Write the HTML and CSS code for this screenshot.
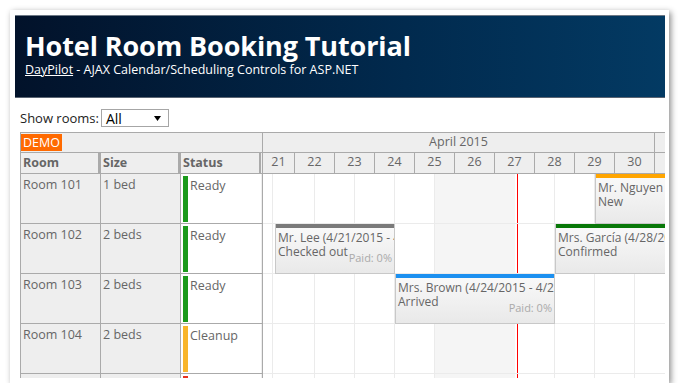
FILE: index.html
```html
<!DOCTYPE html>
<html lang="en">
<head>
  <meta charset="UTF-8">
  <title>Hotel Room Booking Tutorial</title>
  <link rel="stylesheet" href="styles.css">
</head>
<body>
  <div class="window">
    <div class="header">
      <h1>Hotel Room Booking Tutorial</h1>
      <div class="subtitle"><a href="#">DayPilot</a> - AJAX Calendar/Scheduling Controls for ASP.NET</div>
    </div>

    <div class="main">
      <div class="toolbar">
        <span>Show rooms:</span>
        <span class="select">
          <span>All</span>
          <svg width="7" height="5" viewBox="0 0 7 5"><path d="M0 0h7L3.5 5z" fill="#000"/></svg>
        </span>
      </div>

      <div class="scheduler">
        <!-- row headers -->
        <div class="rowpane">
          <div class="corner"><span class="demo">DEMO</span></div>
          <div class="colheads">
            <div class="ch">Room</div>
            <div class="ch">Size</div>
            <div class="ch">Status</div>
          </div>
          <div class="rh">
            <div class="cell">Room 101</div>
            <div class="cell">1 bed</div>
            <div class="cell status"><i class="st ready"></i>Ready</div>
          </div>
          <div class="rh">
            <div class="cell">Room 102</div>
            <div class="cell">2 beds</div>
            <div class="cell status"><i class="st ready"></i>Ready</div>
          </div>
          <div class="rh">
            <div class="cell">Room 103</div>
            <div class="cell">2 beds</div>
            <div class="cell status"><i class="st ready"></i>Ready</div>
          </div>
          <div class="rh">
            <div class="cell">Room 104</div>
            <div class="cell">2 beds</div>
            <div class="cell status"><i class="st cleanup"></i>Cleanup</div>
          </div>
          <div class="rh">
            <div class="cell">Room 105</div>
            <div class="cell">3 beds</div>
            <div class="cell status"><i class="st dirty"></i>Dirty</div>
          </div>
        </div>

        <!-- timeline -->
        <div class="timepane">
          <div class="months">
            <div class="month">April 2015</div>
            <div class="month">May 2015</div>
          </div>
          <div class="days">
            <div class="day first">21</div>
            <div class="day">22</div>
            <div class="day">23</div>
            <div class="day">24</div>
            <div class="day">25</div>
            <div class="day">26</div>
            <div class="day">27</div>
            <div class="day">28</div>
            <div class="day">29</div>
            <div class="day">30</div>
            <div class="day">1</div>
          </div>
          <div class="grid">
            <div class="weekend"></div>
            <div class="now"></div>
            <div class="row">
              <div class="event" style="left: 332px; width: 200px;">
                <div class="bar new"></div>
                <div class="name">Mr. Nguyen (4/29/2015 - 5/2/2015)</div>
                <div class="state">New</div>
              </div>
            </div>
            <div class="row">
              <div class="event" style="left: 12px; width: 120px;">
                <div class="bar out"></div>
                <div class="name">Mr. Lee (4/21/2015 - 4/24/2015)</div>
                <div class="state">Checked out</div>
                <div class="paid">Paid: 0%</div>
              </div>
              <div class="event" style="left: 292px; width: 200px;">
                <div class="bar confirmed"></div>
                <div class="name">Mrs. García (4/28/2015 - 5/2/2015)</div>
                <div class="state">Confirmed</div>
              </div>
            </div>
            <div class="row">
              <div class="event" style="left: 132px; width: 160px;">
                <div class="bar arrived"></div>
                <div class="name">Mrs. Brown (4/24/2015 - 4/28/2015)</div>
                <div class="state">Arrived</div>
                <div class="paid">Paid: 0%</div>
              </div>
            </div>
            <div class="row"></div>
            <div class="row"></div>
          </div>
        </div>
      </div>
    </div>
  </div>
</body>
</html>
```

FILE: styles.css
```css
/* page */
body {
  margin: 0;
  background: #fff;
  font-family: "Open Sans", "Noto Sans", sans-serif;
  color: #666;
}
.window {
  width: 659px;
  height: 373px;
  margin: 10px 0 0 10px;
  padding: 5px 4px 0 5px;
  box-sizing: border-box;
  background: #fff;
  box-shadow: 2px 2px 6px rgba(0, 0, 0, 0.45);
  overflow: hidden;
}

/* header */
.header {
  height: 83px;
  box-sizing: border-box;
  padding: 13px 10px 0;
  background: linear-gradient(90deg, #02122a 0%, #012a4e 60%, #033a63 100%);
  border-top: 1px solid #6d7885;
  border-bottom: 1px solid #5a6472;
  color: #fff;
}
.header h1 {
  margin: 0;
  font-size: 27px;
  line-height: 33px;
  font-weight: 700;
  letter-spacing: -0.1px;
}
.subtitle {
  font-size: 12.5px;
  line-height: 16px;
}
.subtitle a {
  color: #fff;
}

/* toolbar */
.main {
  padding-left: 5px;
}
.toolbar {
  display: flex;
  align-items: center;
  gap: 2px;
  height: 18px;
  padding: 11px 0 5px;
  font-size: 13px;
  color: #222;
}
.select {
  display: flex;
  align-items: center;
  justify-content: space-between;
  width: 68px;
  height: 18px;
  box-sizing: border-box;
  padding: 0 7px 0 4px;
  border: 1px solid #a6a6a6;
  font-size: 14px;
  color: #000;
}

/* scheduler */
.scheduler {
  display: flex;
  height: 245px;
  border-top: 1px solid #aaa;
  border-left: 1px solid #aaa;
  overflow: hidden;
  font-size: 12.5px;
}
.rowpane {
  flex: none;
  width: 241px;
  border-right: 1px solid #aaa;
  background: #eee;
}
.corner {
  height: 20px;
  box-sizing: border-box;
  padding-top: 1px;
  border-bottom: 1px solid #aaa;
}
.demo {
  display: inline-block;
  background: #ff6a00;
  color: #fff;
  padding: 0 2px;
  line-height: 17px;
  font-size: 12.5px;
}
.colheads,
.rh {
  display: grid;
  grid-template-columns: 80px 80px 80px;
  border-bottom: 1px solid #aaa;
}
.colheads {
  height: 20px;
}
.ch {
  padding: 2px 2px 0;
  border-right: 3px solid #aaa;
  font-weight: 700;
  line-height: 16px;
}
.ch:last-child {
  border-right-width: 2px;
}
.rh {
  height: 49px;
}
.cell {
  padding: 3px 2px 0;
  border-right: 1px solid #aaa;
  line-height: 16px;
}
.cell:last-child {
  border-right: none;
}
.cell.status {
  display: flex;
  align-items: flex-start;
  gap: 2px;
  padding: 2px 0 1px 2px;
  background: #fff;
  line-height: 20px;
}
.st {
  flex: none;
  width: 5px;
  height: 46px;
}
.st.ready {
  background: #1b9a1b;
}
.st.cleanup {
  background: #f9b52a;
}
.st.dirty {
  background: #e8321e;
}

/* timeline */
.timepane {
  flex: 1;
  min-width: 0;
}
.months,
.days {
  display: flex;
  height: 20px;
  box-sizing: border-box;
  border-bottom: 1px solid #aaa;
  background: #eee;
}
.days {
  height: 21px;
}
.month {
  flex: none;
  width: 392px;
  box-sizing: border-box;
  border-right: 1px solid #aaa;
  text-align: center;
  line-height: 18px;
}
.day {
  flex: none;
  width: 40px;
  box-sizing: border-box;
  border-right: 1px solid #aaa;
  text-align: center;
  line-height: 18px;
}
.day.first {
  width: 32px;
}
.grid {
  position: relative;
  background: repeating-linear-gradient(90deg, transparent 0 39px, #ebebeb 39px 40px) 12px 0;
}
.weekend {
  position: absolute;
  top: 0;
  bottom: 0;
  left: 171px;
  width: 80px;
  background: #f5f5f5;
  border-left: 1px solid #ebebeb;
}
.now {
  position: absolute;
  top: 0;
  bottom: 0;
  left: 254px;
  width: 1px;
  background: #ff0000;
}
.row {
  position: relative;
  height: 50px;
  box-sizing: border-box;
  border-bottom: 1px solid #ebebeb;
}

/* events */
.event {
  position: absolute;
  top: 0;
  bottom: -1px;
  box-sizing: border-box;
  border: 1px solid #c8c8c8;
  border-top: none;
  background: linear-gradient(#fafafa, #e9e9e9);
  overflow: hidden;
  font-size: 12px;
  line-height: 14px;
  color: #666;
}
.bar {
  height: 4px;
  margin: 0 -1px 3px;
}
.bar.new {
  background: #ffa500;
}
.bar.out {
  background: #7a7a7a;
}
.bar.confirmed {
  background: #087808;
}
.bar.arrived {
  background: #1c90f0;
}
.name,
.state {
  margin-left: 2px;
  white-space: nowrap;
}
.state {
  width: fit-content;
}
.paid {
  position: absolute;
  right: 2px;
  bottom: 9px;
  font-size: 11px;
  line-height: 13px;
  color: #aaa;
}
```
